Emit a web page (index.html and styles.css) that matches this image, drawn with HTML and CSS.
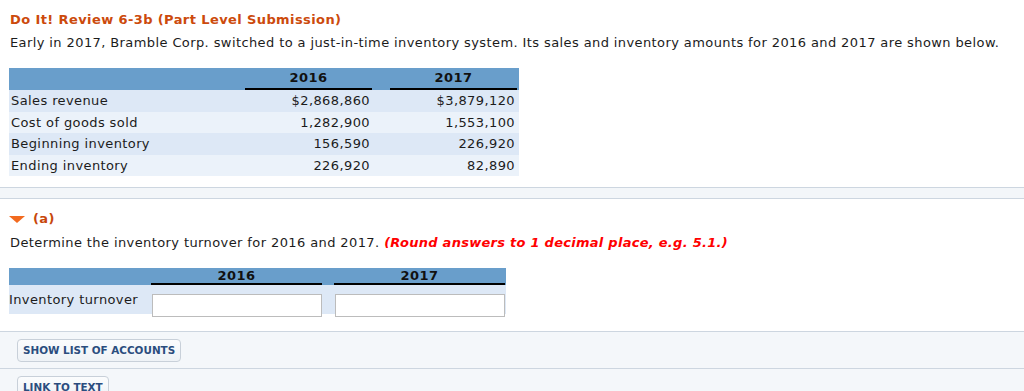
FILE: index.html
```html
<!DOCTYPE html>
<html lang="en">
<head>
<meta charset="utf-8">
<title>Do It! Review 6-3b</title>
<link rel="stylesheet" href="styles.css">
</head>
<body>
<section class="intro-block">
  <h1 class="title">Do It! Review 6-3b (Part Level Submission)</h1>
  <p class="text intro">Early in 2017, Bramble Corp. switched to a just-in-time inventory system. Its sales and inventory amounts for 2016 and 2017 are shown below.</p>
  <div class="data-table">
    <div class="hdr"></div>
    <div class="hdr yr">2016</div>
    <div class="hdr"></div>
    <div class="hdr yr">2017</div>
    <div class="hdr"></div>

    <div class="cell lbl odd">Sales revenue</div>
    <div class="cell num odd">$2,868,860</div>
    <div class="cell odd"></div>
    <div class="cell num odd">$3,879,120</div>
    <div class="cell odd"></div>

    <div class="cell lbl even">Cost of goods sold</div>
    <div class="cell num even">1,282,900</div>
    <div class="cell even"></div>
    <div class="cell num even">1,553,100</div>
    <div class="cell even"></div>

    <div class="cell lbl odd">Beginning inventory</div>
    <div class="cell num odd">156,590</div>
    <div class="cell odd"></div>
    <div class="cell num odd">226,920</div>
    <div class="cell odd"></div>

    <div class="cell lbl even">Ending inventory</div>
    <div class="cell num even">226,920</div>
    <div class="cell even"></div>
    <div class="cell num even">82,890</div>
    <div class="cell even"></div>
  </div>
</section>

<div class="band"></div>

<section class="part">
  <h2 class="part-title"><span class="tri"></span>(a)</h2>
  <p class="text">Determine the inventory turnover for 2016 and 2017. <em class="note">(Round answers to 1 decimal place, e.g. 5.1.)</em></p>
  <div class="answer-table">
    <div class="ahdr"></div>
    <div class="ahdr yr">2016</div>
    <div class="ahdr"></div>
    <div class="ahdr yr">2017</div>
    <div class="ahdr"></div>

    <div class="arow lbl2">Inventory turnover</div>
    <div class="arow"><input class="field" type="text" aria-label="2016"></div>
    <div class="arow"></div>
    <div class="arow"><input class="field" type="text" aria-label="2017"></div>
    <div class="arow"></div>
  </div>
</section>

<section class="tools">
  <div class="tool-row"><button class="btn" type="button">SHOW LIST OF ACCOUNTS</button></div>
  <div class="tool-row"><button class="btn" type="button">LINK TO TEXT</button></div>
</section>
</body>
</html>
```

FILE: styles.css
```css
html, body {
  margin: 0;
  padding: 0;
  background: #ffffff;
}

body {
  font-family: "DejaVu Sans", Verdana, sans-serif;
  font-size: 13px;
  letter-spacing: 0.4px;
  color: #1c1c1c;
  overflow: hidden;
}

.intro-block {
  padding: 12px 0 0 9px;
}

.title {
  margin: 0 0 0 1px;
  font-size: 13px;
  line-height: 16px;
  font-weight: bold;
  color: #cc4a0c;
}

.text {
  margin: 0;
  line-height: 16px;
  padding-left: 1px;
}

.intro {
  margin-top: 7px;
}

/* first data table */
.data-table {
  margin-top: 17px;
  width: 510px;
  display: grid;
  grid-template-columns: 236px 127px 18px 127px 2px;
  grid-auto-rows: 21.5px;
  grid-template-rows: 22px;
}

.hdr {
  background: #699ecb;
  height: 22px;
  box-sizing: border-box;
}

.hdr.yr {
  font-weight: bold;
  text-align: center;
  line-height: 19px;
  padding-bottom: 1px;
  border-bottom: 2px solid #000;
  box-shadow: inset 0 -3px 0 #699ecb;
  color: #111;
}

.cell {
  line-height: 21.5px;
  white-space: nowrap;
}

.cell.lbl {
  padding-left: 2px;
}

.cell.num {
  text-align: right;
  padding-right: 2px;
}

.odd { background: #dde8f6; }
.even { background: #ebf2fa; }

.band {
  margin-top: 11px;
  height: 10px;
  background: #f3f6f9;
  border-top: 1px solid #cdd6e0;
  border-bottom: 1px solid #cdd6e0;
}

.part {
  padding: 0 0 0 9px;
}

.part-title {
  margin: 12px 0 0 0;
  font-size: 13px;
  line-height: 16px;
  font-weight: bold;
  color: #c8480c;
  display: flex;
  align-items: center;
}

.tri {
  display: inline-block;
  width: 0;
  height: 0;
  border-left: 8px solid transparent;
  border-right: 8px solid transparent;
  border-top: 7px solid #f26a1f;
  margin: 1px 8px 0 0;
}

.part-title + .text {
  margin-top: 8px;
}

.note {
  color: #ff0000;
  font-weight: bold;
  font-style: italic;
  letter-spacing: 0.27px;
}

/* answer table */
.answer-table {
  margin-top: 17px;
  width: 497px;
  display: grid;
  grid-template-columns: 142px 171px 12px 171px 1px;
  grid-template-rows: 17px 29px;
}

.ahdr {
  background: #699ecb;
  box-sizing: border-box;
}

.ahdr.yr {
  font-weight: bold;
  text-align: center;
  line-height: 15px;
  border-bottom: 2px solid #000;
  color: #111;
}

.arow {
  background: #dde8f6;
}

.lbl2 {
  padding-top: 6px;
  line-height: 17px;
  white-space: nowrap;
}

.field {
  display: block;
  margin: 9px 0 0 1px;
  width: 170px;
  height: 23px;
  box-sizing: border-box;
  border: 1px solid #bcbcbc;
  background: #fff;
  padding: 0 4px;
  font: inherit;
}

/* tools panel */
.tools {
  margin-top: 17px;
  background: #f4f7fa;
  border-top: 1px solid #cdd6e0;
}

.tool-row {
  padding: 7px 0 6px 17px;
  border-bottom: 1px solid #cdd6e0;
}

.btn {
  display: block;
  height: 23px;
  padding: 0 5px;
  border: 1px solid #c8d0d9;
  border-radius: 4px;
  background: linear-gradient(#fbfcfd, #eef2f6);
  font-family: "DejaVu Sans", Verdana, sans-serif;
  font-size: 10.4px;
  letter-spacing: 0;
  font-weight: bold;
  color: #2b4d7e;
  line-height: 21px;
  cursor: pointer;
}
```
